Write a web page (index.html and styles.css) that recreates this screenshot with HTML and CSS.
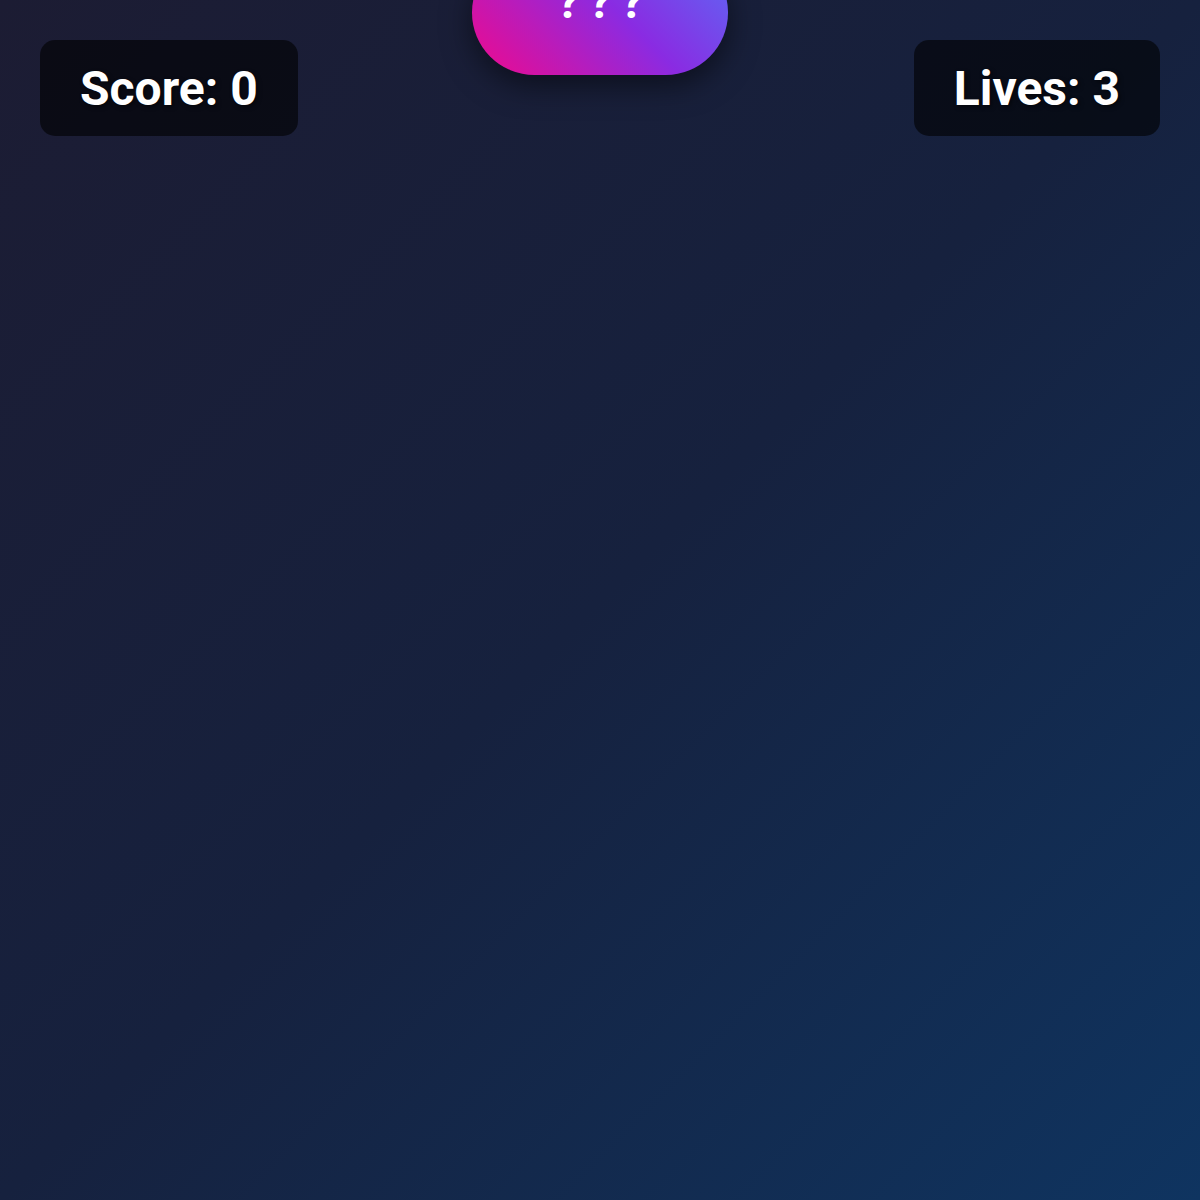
FILE: index.html
```html
<!doctype html>
<html lang="en">
  <head>
    <meta charset="UTF-8" />
    <meta name="viewport" content="width=device-width, initial-scale=1.0" />
    <title>Guess Game</title>
    <link rel="stylesheet" href="styles.css">
  </head>
  <body>
    <div class="hud">
      <div class="stat" id="score">Score: 0</div>
      <div class="mystery" id="mystery">???</div>
      <div class="stat stat-right" id="lives">Lives: 3</div>
    </div>
  </body>
</html>
```

FILE: styles.css
```css
:root {
  font-family: Roboto, "Liberation Sans", Arial, sans-serif;
  color: #fff;
}

html, body {
  margin: 0;
  height: 100%;
}

body {
  min-height: 100vh;
  overflow: hidden;
  background: linear-gradient(135deg, #1c1c33 0%, #16213e 50%, #0f3460 100%);
}

.hud {
  display: grid;
  grid-template-columns: 1fr auto 1fr;
  align-items: start;
  padding: 40px;
}

.stat {
  justify-self: start;
  background: rgba(0, 0, 0, 0.6);
  border-radius: 15px;
  padding: 20px 40px 19px;
  font-size: 48px;
  font-weight: 700;
  text-shadow: 2px 2px 4px rgba(0, 0, 0, 0.5);
}

.stat-right {
  justify-self: end;
}

.mystery {
  margin-top: -90px;
  padding: 24px 76px 45px 84px;
  border-radius: 64px;
  background: linear-gradient(45deg, #f0098c 0%, #8a2be2 55%, #5b6cf5 100%);
  box-shadow: 0 10px 30px rgba(0, 0, 0, 0.5);
  font-size: 48px;
  font-weight: 700;
  letter-spacing: 8px;
  line-height: 56px;
}
```
